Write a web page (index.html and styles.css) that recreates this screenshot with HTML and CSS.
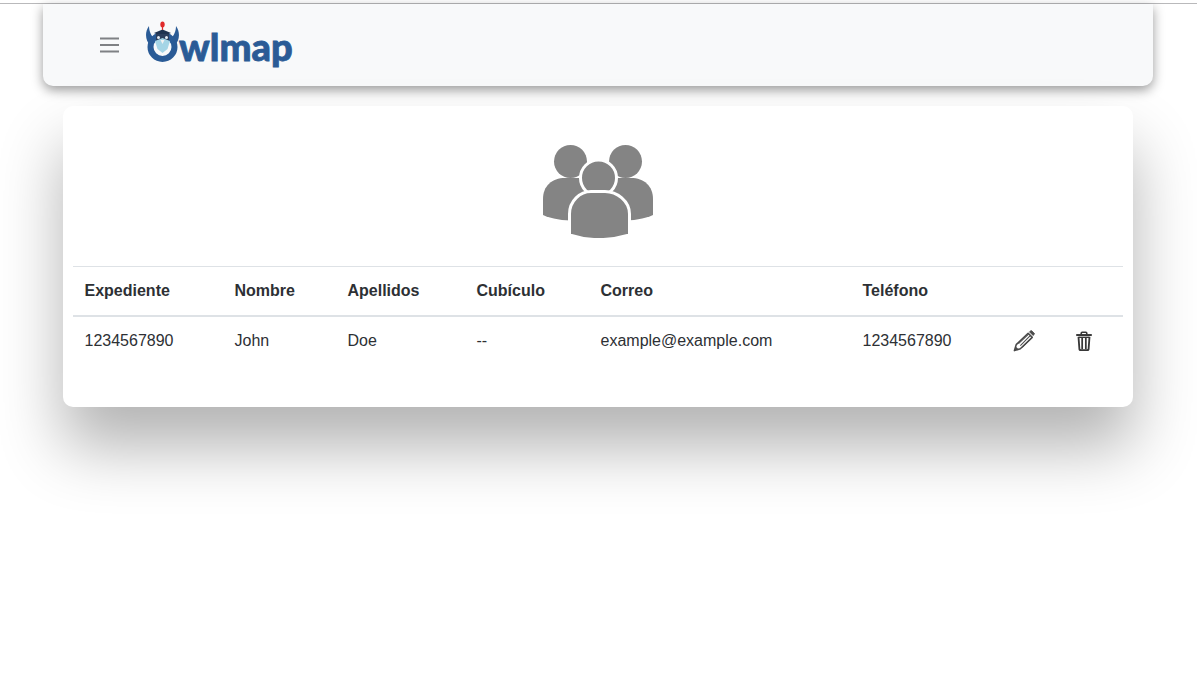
FILE: index.html
```html
<!DOCTYPE html>
<html lang="es">
<head>
    <meta charset="UTF-8">
    <meta name="viewport" content="width=device-width, initial-scale=1.0">
    <title>Owlmap</title>
    <link rel="stylesheet" href="styles.css">
</head>
<body>
    <div class="container">
        <nav class="navbar">
            <button class="menu-btn" aria-label="Menu">
                <svg width="22" height="18" viewBox="0 0 22 18"><path d="M1 2.500h19M1 9h19M1 15.500h19" stroke="#7f8184" stroke-width="2" fill="none"/></svg>
            </button>
            <div class="logo">
                <svg class="logo-mark" width="34" height="44" viewBox="0 0 34 44">
                    <path d="M3 5C-2 12 0 20 4 24L9 18C5 15 3 10 3 5Z" fill="#2a5b96"/>
                    <path d="M30 5C35 12 33 20 29 24L24 18C28 15 30 10 30 5Z" fill="#2a5b96"/>
                    <circle cx="16.500" cy="26" r="12" fill="none" stroke="#2a5b96" stroke-width="6"/>
                    <path d="M8 12L16.500 8.500L25 12L16.500 15.500Z" fill="#1f3350"/>
                    <path d="M10 13H23V21H10Z" fill="#2c3f5c"/>
                    <path d="M9 20L16.500 17L24 20L21.500 28L16.500 32L11.500 28Z" fill="#a5d5e6"/>
                    <circle cx="12.500" cy="16.500" r="1.500" fill="#e8eef4"/>
                    <circle cx="20.500" cy="16.500" r="1.500" fill="#e8eef4"/>
                    <path d="M14.500 19H18.500L16.500 23Z" fill="#f2f2f2"/>
                    <path d="M16.500 9V5" stroke="#e02a2a" stroke-width="1.200"/>
                    <ellipse cx="16.500" cy="3.500" rx="2.200" ry="3" fill="#e02a2a"/>
                </svg>
                <span class="logo-text">wlmap</span>
            </div>
        </nav>

        <main class="card">
            <div class="card-icon">
                <svg width="110" height="94" viewBox="0 0 110 94">
                    <circle cx="27.500" cy="17.500" r="16.500" fill="#848484"/>
                    <circle cx="82.500" cy="17.500" r="16.500" fill="#848484"/>
                    <path d="M0 71V55C0 42 9 34 22 34H36C48 34 56 42 56 55V74C40 78 15 78 0 71Z" fill="#848484"/>
                    <path d="M110 71V55C110 42 101 34 88 34H74C62 34 54 42 54 55V74C70 78 95 78 110 71Z" fill="#848484"/>
                    <circle cx="55.500" cy="34" r="18" fill="#848484" stroke="#fff" stroke-width="3"/>
                    <path d="M26.500 91V70C26.500 57 37 47.500 48 47.500H62C74 47.500 86.500 57 86.500 70V91C66 97 45 97 26.500 91Z" fill="#848484" stroke="#fff" stroke-width="3"/>
                </svg>
            </div>
            <table class="users-table">
                <colgroup>
                    <col class="col-exp"><col class="col-name"><col class="col-last"><col class="col-cub"><col class="col-mail"><col class="col-tel"><col class="col-act"><col class="col-act">
                </colgroup>
                <thead>
                    <tr>
                        <th>Expediente</th>
                        <th>Nombre</th>
                        <th>Apellidos</th>
                        <th>Cubículo</th>
                        <th>Correo</th>
                        <th>Teléfono</th>
                        <th></th>
                        <th></th>
                    </tr>
                </thead>
                <tbody>
                    <tr>
                        <td>1234567890</td>
                        <td>John</td>
                        <td>Doe</td>
                        <td>--</td>
                        <td>example@example.com</td>
                        <td>1234567890</td>
                        <td>
                            <svg class="icon" width="22" height="22" viewBox="0 0 24 24" fill="none" stroke="#4a4a4a">
                                <path d="M1.500 22.500L3.500 16L16.500 3.500L21 8L8 20.500Z" stroke-width="1.700" stroke-linejoin="round"/>
                                <path d="M6 15L17 4.500M8 17L18.500 6.500M10 19L20 9" stroke-width="1.100"/>
                                <path d="M18 2L20 .5L23.500 4L22 6Z" fill="#4a4a4a" stroke-width="1"/>
                                <path d="M1.500 22.500L3 18L6 21Z" fill="#4a4a4a" stroke="none"/>
                            </svg>
                        </td>
                        <td>
                            <svg class="icon trash" width="22" height="22" viewBox="0 0 24 24" fill="none" stroke="#383838">
                                <path d="M3.500 5.500H20.500" stroke-width="2.200"/>
                                <path d="M9 5V3.500C9 2.800 9.500 2.500 10 2.500H14C14.500 2.500 15 2.800 15 3.500V5" stroke-width="1.800"/>
                                <path d="M6 7.500L7 21C7.100 21.700 7.500 22 8 22H16C16.500 22 16.900 21.700 17 21L18 7.500" stroke-width="2"/>
                                <path d="M6 8H18" stroke-width="1.500"/>
                                <path d="M10 8V21M14 8V21" stroke-width="1.900"/>
                            </svg>
                        </td>
                    </tr>
                </tbody>
            </table>
        </main>
    </div>
</body>
</html>
```

FILE: styles.css
```css
html, body {
    height: 100%;
}

body {
    margin: 0;
    font-family: "Liberation Sans", Arial, sans-serif;
    font-size: 16px;
    color: #2d3034;
    background-color: #fff;
}

.container {
    box-sizing: border-box;
    min-height: 100%;
    margin-top: 3px;
    border-top: 1px solid #b9b9bb;
    padding: 0 44px 0 43px;
}

.navbar {
    display: flex;
    align-items: center;
    height: 82px;
    padding-left: 56px;
    gap: 25px;
    background-color: #f8f9fa;
    border-radius: 0 0 10px 10px;
    box-shadow: 0 4px 12px rgba(0, 0, 0, 0.4);
}

.menu-btn {
    display: flex;
    padding: 0;
    border: none;
    background: none;
}

.logo {
    display: flex;
    align-items: flex-end;
    margin-bottom: 4px;
}

.logo-mark {
    display: block;
}

.logo-text {
    margin-left: -1px;
    font-family: Lato, sans-serif;
    font-size: 38px;
    font-weight: 900;
    line-height: 38px;
    color: #2a5b96;
    -webkit-text-stroke: 0.8px #2a5b96;
}

.card {
    margin: 20px 20px 0;
    height: 301px;
    padding: 0 10px;
    box-sizing: border-box;
    background-color: #fff;
    border-radius: 10px;
    box-shadow: 0 40px 64px rgba(0, 0, 0, 0.3);
}

.card-icon {
    display: flex;
    justify-content: center;
    padding: 38px 0 28px;
}

.card-icon svg {
    display: block;
}

.users-table {
    width: 100%;
    table-layout: fixed;
    border-collapse: collapse;
}

.col-exp { width: 150px; }
.col-name { width: 113px; }
.col-last { width: 129px; }
.col-cub { width: 124px; }
.col-mail { width: 262px; }
.col-tel { width: 150px; }
.col-act { width: 61px; }

.users-table th,
.users-table td {
    padding: 12px 12px 12px 11.500px;
    text-align: left;
    line-height: 24px;
}

.users-table thead tr {
    border-top: 1px solid #dee2e6;
    border-bottom: 2px solid #dee2e6;
}

.icon {
    display: block;
}

.trash {
    margin-left: -1px;
}
```
